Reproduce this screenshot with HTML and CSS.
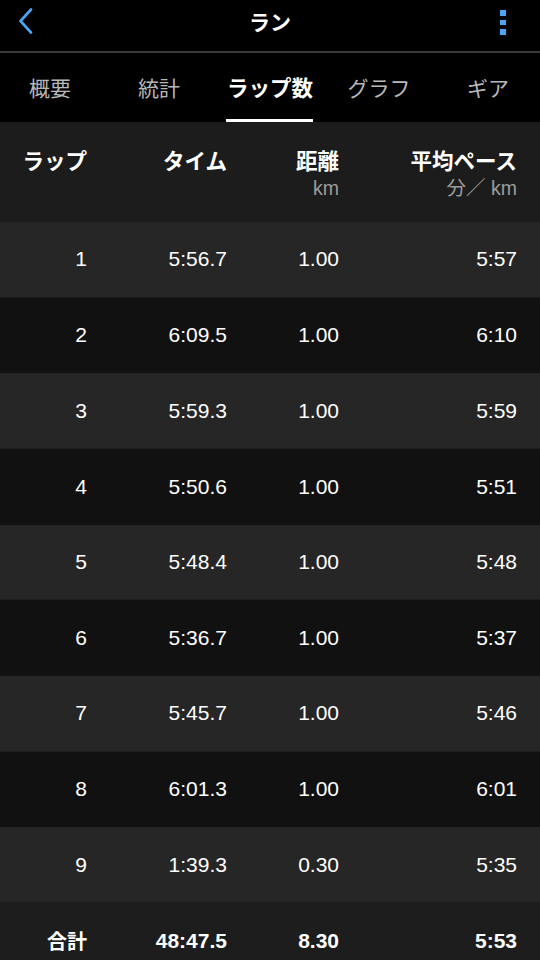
FILE: index.html
```html
<!DOCTYPE html>
<html lang="ja">
<head>
<meta charset="utf-8">
<title>ラン</title>
<link rel="stylesheet" href="styles.css">
</head>
<body>
<div class="app">
  <header class="nav">
    <div class="nav-back">
      <svg width="16" height="26" viewBox="0 0 16 26"><path d="M13 1.5 L2.5 13 L13 24.5" fill="none" stroke="#4aa6f2" stroke-width="2.6" stroke-linecap="round" stroke-linejoin="round"/></svg>
    </div>
    <div class="nav-title">ラン</div>
    <div class="nav-more">
      <span class="dot"></span><span class="dot"></span><span class="dot"></span>
    </div>
  </header>
  <nav class="tabs">
    <div class="tab">概要</div>
    <div class="tab">統計</div>
    <div class="tab active">ラップ数</div>
    <div class="tab">グラフ</div>
    <div class="tab">ギア</div>
  </nav>
  <div class="table">
    <div class="row head">
      <div class="cell"><span class="h">ラップ</span></div>
      <div class="cell"><span class="h">タイム</span></div>
      <div class="cell"><span class="h">距離</span><span class="u">km</span></div>
      <div class="cell"><span class="h">平均ペース</span><span class="u">分／ km</span></div>
    </div>
    <div class="row light"><div class="cell">1</div><div class="cell">5:56.7</div><div class="cell">1.00</div><div class="cell">5:57</div></div>
    <div class="row dark"><div class="cell">2</div><div class="cell">6:09.5</div><div class="cell">1.00</div><div class="cell">6:10</div></div>
    <div class="row light"><div class="cell">3</div><div class="cell">5:59.3</div><div class="cell">1.00</div><div class="cell">5:59</div></div>
    <div class="row dark"><div class="cell">4</div><div class="cell">5:50.6</div><div class="cell">1.00</div><div class="cell">5:51</div></div>
    <div class="row light"><div class="cell">5</div><div class="cell">5:48.4</div><div class="cell">1.00</div><div class="cell">5:48</div></div>
    <div class="row dark"><div class="cell">6</div><div class="cell">5:36.7</div><div class="cell">1.00</div><div class="cell">5:37</div></div>
    <div class="row light"><div class="cell">7</div><div class="cell">5:45.7</div><div class="cell">1.00</div><div class="cell">5:46</div></div>
    <div class="row dark"><div class="cell">8</div><div class="cell">6:01.3</div><div class="cell">1.00</div><div class="cell">6:01</div></div>
    <div class="row light"><div class="cell">9</div><div class="cell">1:39.3</div><div class="cell">0.30</div><div class="cell">5:35</div></div>
    <div class="row total"><div class="cell">合計</div><div class="cell">48:47.5</div><div class="cell">8.30</div><div class="cell">5:53</div></div>
  </div>
</div>
</body>
</html>
```

FILE: styles.css
```css
* { box-sizing: border-box; }
html, body {
  margin: 0;
  padding: 0;
  background: #000;
}
body {
  width: 540px;
  height: 960px;
  overflow: hidden;
  font-family: "Liberation Sans", "Noto Sans CJK JP", sans-serif;
  color: #fff;
}
.app {
  width: 540px;
}
.nav {
  height: 53px;
  border-bottom: 2px solid #3a3a3a;
  display: flex;
  align-items: flex-start;
  justify-content: space-between;
  padding: 0 34px 0 18px;
  position: relative;
}
.nav-back {
  height: 42px;
  display: flex;
  align-items: center;
}
.nav-back svg { display: block; }
.nav-title {
  position: absolute;
  left: 0;
  right: 0;
  top: 0;
  text-align: center;
  line-height: 42px;
  font-family: "Noto Sans CJK JP", sans-serif;
  font-weight: 700;
  font-size: 21px;
  pointer-events: none;
}
.nav-more {
  display: flex;
  flex-direction: column;
  gap: 4px;
  padding-top: 10px;
}
.dot {
  width: 6px;
  height: 5.5px;
  background: #4aa6f2;
}
.tabs {
  height: 69px;
  display: grid;
  grid-template-columns: 100px 118px 104px 114px 104px;
  background: #000;
}
.tab {
  position: relative;
  display: flex;
  align-items: center;
  justify-content: center;
  font-family: "Noto Sans CJK JP", sans-serif;
  font-size: 21px;
  color: #b8b8b8;
  padding-bottom: 2px;
}
.tab.active {
  color: #fff;
  font-weight: 700;
  font-size: 21.5px;
}
.tab.active::after {
  content: "";
  position: absolute;
  left: 8px;
  right: 9px;
  bottom: 0;
  height: 3px;
  background: #fff;
}
.table {
  display: flex;
  flex-direction: column;
}
.row {
  display: grid;
  grid-template-columns: 87px 140px 112px 178px;
  height: 75.67px;
  align-items: center;
  font-size: 21px;
}
.cell {
  text-align: right;
  display: flex;
  flex-direction: column;
  align-items: flex-end;
}
.row.head {
  height: 100px;
  background: #1c1c1c;
  align-items: start;
  padding-top: 23px;
}
.h {
  font-family: "Noto Sans CJK JP", sans-serif;
  font-weight: 700;
  font-size: 21.5px;
  line-height: 30px;
}
.u {
  font-family: "Liberation Sans", "Noto Sans CJK JP", sans-serif;
  font-size: 19.5px;
  line-height: 26px;
  color: #9c9c9c;
  white-space: pre;
}
.row.light {
  background: #262626;
  border-bottom: 1px solid #1e1e1e;
}
.row.dark {
  background: #111111;
}
.row.total {
  background: #1d1d1d;
  font-weight: 700;
}
.row.total .cell:first-child {
  font-family: "Noto Sans CJK JP", sans-serif;
  font-size: 20px;
}
```
